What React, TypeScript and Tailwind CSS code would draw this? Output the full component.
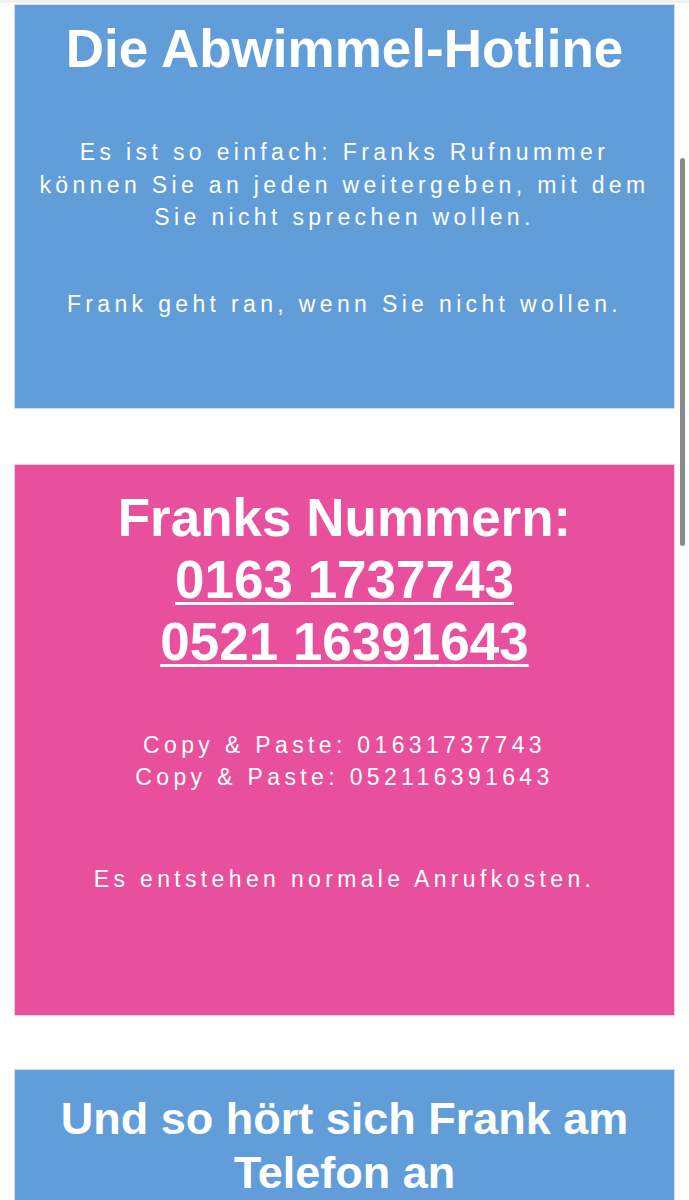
import React from 'react';

const body = "font-['Liberation_Sans',Arial,sans-serif] text-[23px] leading-[32.5px] tracking-[4.35px] text-white";
const title = "font-['Liberation_Sans',Arial,sans-serif] font-bold text-white";

const App = () => {
  return (
    <div className="relative min-h-screen bg-white px-[14px] pt-[4px] pb-10">
      <div className="h-[3px] -mt-[4px] mb-[1px] -mx-[14px] bg-[#f1f1f1]" />

      {/* Intro */}
      <section className="bg-[#619dd9] border border-[#d6dde6] text-center pt-[13px] pb-[88px]">
        <h1 className={`${title} text-[53px] leading-[62px]`}>Die Abwimmel-Hotline</h1>
        <p className={`${body} mt-[56px] px-6`}>
          Es ist so einfach: Franks Rufnummer können Sie an jeden weitergeben, mit dem Sie nicht
          sprechen wollen.
        </p>
        <p className={`${body} mt-[54px]`}>Frank geht ran, wenn Sie nicht wollen.</p>
      </section>

      {/* Numbers */}
      <section className="mt-[55px] bg-[#e84f9c] border border-[#ead3df] text-center pt-[22px] pb-[119px]">
        <h2 className={`${title} text-[53px] leading-[62px]`}>
          Franks Nummern:
          <br />
          <a href="tel:01631737743" className="underline decoration-[3px] underline-offset-[4px]">
            0163 1737743
          </a>
          <br />
          <a href="tel:052116391643" className="underline decoration-[3px] underline-offset-[4px]">
            0521 16391643
          </a>
        </h2>
        <p className={`${body} mt-[56px] leading-[32px]`}>
          Copy &amp; Paste: 01631737743
          <br />
          Copy &amp; Paste: 052116391643
        </p>
        <p className={`${body} mt-[70px]`}>Es entstehen normale Anrufkosten.</p>
      </section>

      {/* Audio */}
      <section className="mt-[53px] bg-[#619dd9] border border-[#d6dde6] text-center pt-[22px] pb-[120px]">
        <h2 className={`${title} text-[45px] leading-[54px] px-8`}>
          Und so hört sich Frank am Telefon an
        </h2>
      </section>

      {/* overlay scrollbar */}
      <div className="absolute left-[680px] top-[158px] w-[5px] h-[388px] rounded-full bg-[#8a8a8a]" />
    </div>
  );
};

export default App;
